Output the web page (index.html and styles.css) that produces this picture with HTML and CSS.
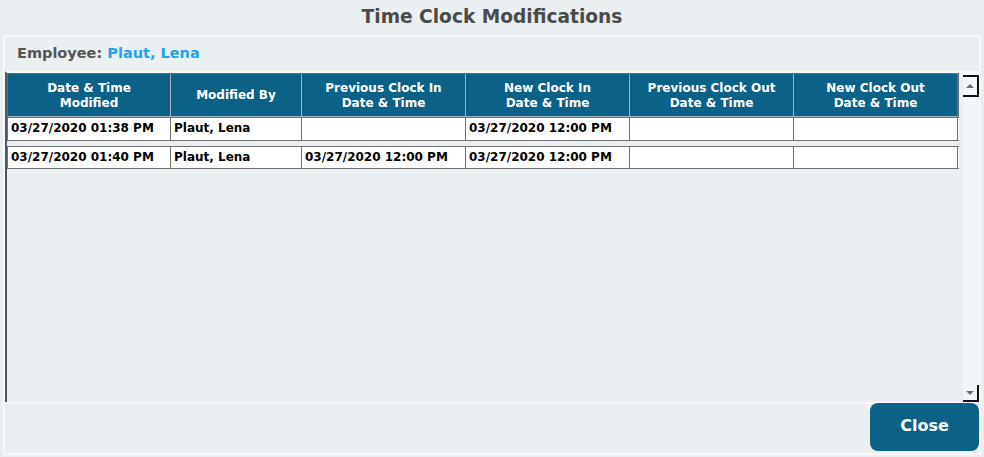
FILE: index.html
```html
<!DOCTYPE html>
<html>
<head>
<meta charset="utf-8">
<link rel="stylesheet" href="styles.css">
</head>
<body>
<div class="dialog">
  <h1 class="title">Time Clock Modifications</h1>
  <div class="panel">
    <div class="employee"><span class="label">Employee:</span> <span class="name">Plaut, Lena</span></div>
    <div class="grid-wrap">
      <div class="grid">
        <div class="row head">
          <div class="cell c1">Date &amp; Time<br>Modified</div>
          <div class="cell c2">Modified By</div>
          <div class="cell c3">Previous Clock In<br>Date &amp; Time</div>
          <div class="cell c4">New Clock In<br>Date &amp; Time</div>
          <div class="cell c5">Previous Clock Out<br>Date &amp; Time</div>
          <div class="cell c6">New Clock Out<br>Date &amp; Time</div>
        </div>
        <div class="row data">
          <div class="cell c1">03/27/2020 01:38 PM</div>
          <div class="cell c2">Plaut, Lena</div>
          <div class="cell c3"></div>
          <div class="cell c4">03/27/2020 12:00 PM</div>
          <div class="cell c5"></div>
          <div class="cell c6"></div>
        </div>
        <div class="row data">
          <div class="cell c1">03/27/2020 01:40 PM</div>
          <div class="cell c2">Plaut, Lena</div>
          <div class="cell c3">03/27/2020 12:00 PM</div>
          <div class="cell c4">03/27/2020 12:00 PM</div>
          <div class="cell c5"></div>
          <div class="cell c6"></div>
        </div>
      </div>
      <div class="scrollbar">
        <div class="sb-btn up"><span class="tri-up"></span></div>
        <div class="sb-track"></div>
        <div class="sb-btn down"><span class="tri-down"></span></div>
      </div>
    </div>
    <div class="footer">
      <button class="close">Close</button>
    </div>
  </div>
</div>
</body>
</html>
```

FILE: styles.css
```css
html, body {
  margin: 0;
  padding: 0;
  background: #eaeff2;
  font-family: "DejaVu Sans", Verdana, sans-serif;
}
.dialog {
  width: 984px;
  height: 457px;
  display: flex;
  flex-direction: column;
  box-sizing: border-box;
}
.title {
  margin: 0;
  height: 35px;
  line-height: 34px;
  text-align: center;
  font-size: 18.6px;
  font-weight: bold;
  color: #4b4b4b;
}
.panel {
  margin: 0 3px 2px 3px;
  border: 2px solid #f7f9fb;
  flex: 1;
  display: flex;
  flex-direction: column;
  box-sizing: border-box;
}
.employee {
  height: 34px;
  line-height: 32px;
  padding-left: 12px;
  font-size: 14.5px;
  font-weight: bold;
}
.employee .label { color: #555555; }
.employee .name { color: #1ba6ec; }
.grid-wrap {
  height: 331px;
  display: flex;
  border-left: 2px solid #4c5a68;
  border-top: 2px solid #f7f9fb;
  box-sizing: border-box;
}
.grid {
  width: 954px;
  display: flex;
  flex-direction: column;
  gap: 5px;
}
.row {
  display: flex;
}
.cell {
  box-sizing: border-box;
  font-size: 12px;
  font-weight: bold;
}
.c1 { width: 164px; }
.c2 { width: 131px; }
.c3 { width: 164px; }
.c4 { width: 164px; }
.c5 { width: 164px; }
.c6 { width: 164px; }
.head {
  height: 43px;
  margin-bottom: -5px;
  border: 1px solid #5f6f78;
  border-bottom: none;
}
.head .cell {
  background: #0b6188;
  color: #ffffff;
  text-align: center;
  display: flex;
  align-items: center;
  justify-content: center;
  line-height: 15px;
  border-right: 1px solid #9fb4be;
  border-bottom: 1px solid #9fb4be;
  padding-top: 1px;
}
.head .c1 { width: 163px; }
.head .c6 { border-right: 1px solid #5f6f78; }
.data {
  height: 24px;
  background: #ffffff;
  border: 1px solid #707070;
  border-right: none;
  box-sizing: border-box;
}
.data + .data { height: 23px; }
.data .cell {
  border-right: 1px solid #707070;
  line-height: 21px;
  padding-left: 3px;
  color: #000;
}
.data .c1 { width: 163px; }
.scrollbar {
  width: 17px;
  margin-left: 4px;
  background: #f3f6f8;
  display: flex;
  flex-direction: column;
}
.sb-btn {
  box-sizing: border-box;
  display: flex;
  align-items: center;
  justify-content: center;
}
.sb-btn.up {
  margin-top: 2px;
  border-top: 2px solid #111;
  border-right: 2px solid #111;
  border-bottom: 2px solid #111;
  height: 22px;
}
.sb-btn.down {
  border-right: 2px solid #111;
  border-bottom: 2px solid #111;
  height: 17px;
}
.sb-track { flex: 1; }
.tri-up {
  width: 0; height: 0;
  border-left: 4px solid transparent;
  border-right: 4px solid transparent;
  border-bottom: 4px solid #6a6a6a;
}
.tri-down {
  width: 0; height: 0;
  border-left: 4px solid transparent;
  border-right: 4px solid transparent;
  border-top: 4px solid #6a6a6a;
}
.footer {
  flex: 1;
  display: flex;
  justify-content: flex-end;
  align-items: flex-start;
  border-top: 2px solid #f7f9fb;
}
.close {
  width: 109px;
  height: 48px;
  margin-top: -1px;
  background: #0b6188;
  color: #fff;
  border: none;
  border-radius: 8px;
  font-family: "DejaVu Sans", Verdana, sans-serif;
  font-size: 16px;
  font-weight: bold;
  padding: 0 0 4px 0;
  cursor: pointer;
}
```
